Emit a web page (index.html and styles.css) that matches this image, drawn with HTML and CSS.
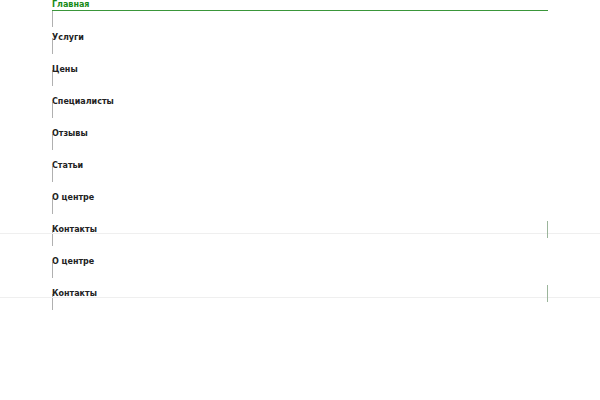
FILE: index.html
```html
<!DOCTYPE html>
<html lang="ru">
<head>
  <meta charset="UTF-8" />
  <meta name="viewport" content="width=device-width, initial-scale=1" />
  <title>Меню</title>
  <link rel="stylesheet" href="styles.css">
</head>
<body>

  <nav class="menu">
    <ul class="menu-list">
      <li class="menu-item active"><a href="#">Главная</a></li>
      <li class="menu-item"><a href="#">Услуги</a></li>
      <li class="menu-item"><a href="#">Цены</a></li>
      <li class="menu-item"><a href="#">Специалисты</a></li>
      <li class="menu-item"><a href="#">Отзывы</a></li>
      <li class="menu-item"><a href="#">Статьи</a></li>
      <li class="menu-item"><a href="#">О центре</a></li>
      <li class="menu-item fixed"><a href="#">Контакты</a><span class="edge"></span></li>
      <li class="menu-item"><a href="#">О центре</a></li>
      <li class="menu-item fixed"><a href="#">Контакты</a><span class="edge"></span></li>
    </ul>
  </nav>

</body>
</html>
```

FILE: styles.css
```css
* {
  box-sizing: border-box;
}

body {
  margin: 0;
  background: #fff;
  font-family: "DejaVu Sans", sans-serif;
}

.menu {
  padding: 0 52px;
}

.menu-list {
  list-style: none;
  margin: 0;
  padding: 0;
  display: flex;
  flex-direction: column;
}

.menu-item {
  position: relative;
  height: 32px;
}

.menu-item a {
  position: relative;
  display: block;
  font-size: 8px;
  font-weight: bold;
  line-height: 10px;
  padding-top: 1px;
  color: #222;
  text-decoration: none;
  z-index: 1;
}

.menu-item::after {
  content: "";
  display: block;
  width: 0;
  height: 16px;
  margin-top: -5px;
  border-left: 1px solid #b0b0b0;
}

.menu-item.active a {
  color: #178a17;
  padding-top: 0;
  border-bottom: 1px solid #3a963a;
}

.menu-item.active::after {
  margin-top: 0;
}

.menu-item.fixed::before {
  content: "";
  position: absolute;
  left: -52px;
  right: -52px;
  top: 9px;
  height: 1px;
  background: #efefef;
}

.edge {
  position: absolute;
  right: 0;
  top: -3px;
  height: 17px;
  border-left: 1px solid #9bb59b;
}
```
